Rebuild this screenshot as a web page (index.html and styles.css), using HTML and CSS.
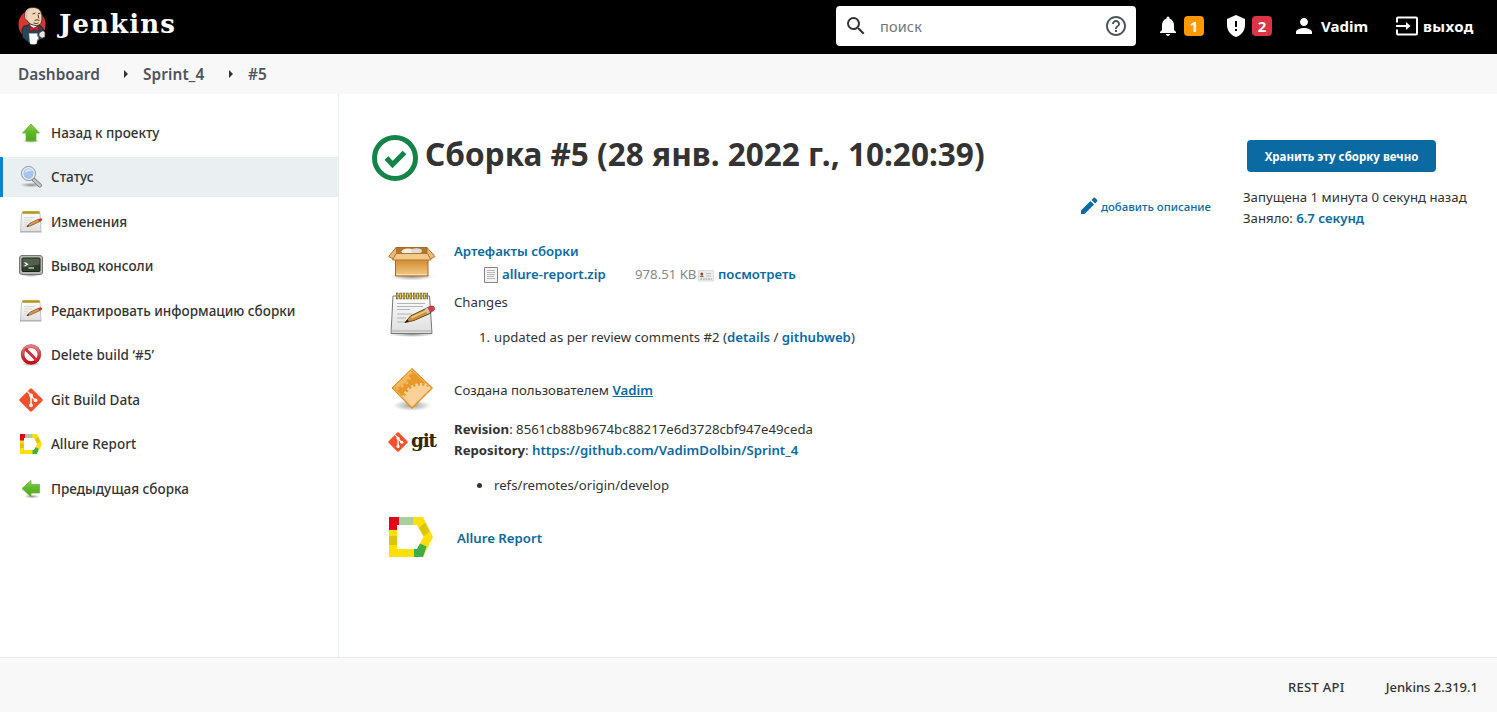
FILE: index.html
```html
<!DOCTYPE html>
<html lang="ru">
<head>
<meta charset="utf-8">
<title>Sprint_4 #5 [Jenkins]</title>
<link rel="stylesheet" href="styles.css">
</head>
<body>
<svg class="defs" aria-hidden="true">
  <defs>
    <linearGradient id="green" x1="0" y1="0" x2="0" y2="1"><stop offset="0" stop-color="#8fcf4c"/><stop offset=".5" stop-color="#5fb827"/><stop offset="1" stop-color="#4aa81b"/></linearGradient>
    <linearGradient id="paper" x1="0" y1="0" x2="0" y2="1"><stop offset="0" stop-color="#fdfdfd"/><stop offset="1" stop-color="#dedede"/></linearGradient>
    <linearGradient id="orange" x1="0" y1="0" x2="1" y2="1"><stop offset="0" stop-color="#e59a2c"/><stop offset="1" stop-color="#ea9524"/></linearGradient>
    <linearGradient id="carton" x1="0" y1="0" x2="0" y2="1"><stop offset="0" stop-color="#c98532"/><stop offset=".4" stop-color="#d9993f"/><stop offset="1" stop-color="#f3ca8a"/></linearGradient>
    <linearGradient id="redring" x1="0" y1="0" x2="0" y2="1"><stop offset="0" stop-color="#e88080"/><stop offset="1" stop-color="#c4060c"/></linearGradient>
    <radialGradient id="shade"><stop offset="0" stop-color="#000" stop-opacity=".4"/><stop offset="1" stop-color="#000" stop-opacity="0"/></radialGradient>
    <clipPath id="diamond"><path d="M24 4L42.500 22 24 40.500 6 22z"/></clipPath>
    <symbol id="notepad-small" viewBox="0 0 24 24">
      <path d="M2.500 3.500h18.500l1 18h-20.500z" fill="url(#paper)" stroke="#c4c4c0"/>
      <path d="M1 22h21.500" stroke="#999" stroke-width=".8"/>
      <path d="M3.500 1h17v3h-17z" fill="#c2ad40"/><path d="M3.500 2.500h17" stroke="#927f24" stroke-dasharray="1 1"/>
      <path d="M5 7.500h11M5 10h8M5 12.500h4M5 15h3" stroke="#d8d8d8"/>
      <path d="M8 16.500l3-3.300 8.500-4 1.300 2.400-9.500 4.300z" fill="#d99a48" stroke="#79501e" stroke-width=".7"/>
      <path d="M19 9.300l2.700-1.100q1.700 0 1.500 2.200L20.500 11.800z" fill="#d8332b"/><path d="M7.500 17l1.700-2 .8 1.300z" fill="#222"/>
    </symbol>
    <symbol id="git-mark" viewBox="0 0 24 24">
      <path d="M11 .7a1.500 1.500 0 0 1 2 0L23.300 11a1.500 1.500 0 0 1 0 2L13 23.300a1.500 1.500 0 0 1-2 0L.7 13a1.500 1.500 0 0 1 0-2z" fill="#f4502c"/>
      <path d="M8.400 3.500L12 7.200v10.300M12 8l4 4" stroke="#fff" stroke-width="1.500" fill="none"/>
      <circle cx="12" cy="7.500" r="1.900" fill="#fff"/><circle cx="12" cy="17.300" r="1.900" fill="#fff"/><circle cx="16.500" cy="12.300" r="1.900" fill="#fff"/>
    </symbol>
    <symbol id="allure" viewBox="0 0 44 40">
      <path d="M0 0h34l10 20-10 20H0zM8 8v24h20l6.500-12L28 8z" fill="#ffdf0a" fill-rule="evenodd"/>
      <path d="M0 0h10v8H8v5H0z" fill="#e30613"/><path d="M10 0h14.500v8H10z" fill="#a6d0a0"/>
      <path d="M0 19h8v9H0z" fill="#dfc40e"/><path d="M30 11l6-5.500 4.500 9L35 19z" fill="#dfc40e"/>
      <path d="M25 40v-8h3l3-5.500 6.500 3L34 40z" fill="#3fae49"/>
    </symbol>
  </defs>
</svg>

<header class="header">
  <a class="brand">
    <svg class="brand-head" width="30" height="40" viewBox="0 0 30 40">
      <ellipse cx="14" cy="18.500" rx="13.500" ry="14.500" fill="#d33833"/>
      <path d="M4.500 31.500L4 24l1.500-3.500 6-2 9 0 4 3 2.500 6-1.500 4.500-8 4-7 .5z" fill="#28455a" stroke="#111" stroke-width=".7"/>
      <path d="M11.500 18.500l4.500 5 4-5z" fill="#f4f4f4"/>
      <path d="M7 11C6.500 4 10 1.500 15.500 1.500S24 5 24 11c0 6-1.500 8.500-5.500 8.500-4.500 0-8.500-2.500-10-6z" fill="#f0d6b7" stroke="#33261f" stroke-width=".9"/>
      <path d="M7 9c0-4.500 3-7 6-7-3 2-3.500 4-3.500 7.500L9 14C7 13 6.700 11 7 9z" fill="#cfc4b4"/>
      <path d="M14.500 8l3-1M20 7.500l2.500-.3M16.500 14.500q2.500-1.500 5 0M15.500 17q3 1 5 0M20 8.500l.8 4" stroke="#4b3b30" stroke-width="1" fill="none"/>
      <path d="M11.500 20.500l4.300 1.500 4.700-2v5l-4.500-1.300-4.300 1.800z" fill="#c8202f" stroke="#711" stroke-width=".5"/>
      <path d="M11 27.500h8.300v3h1v3h-1l-.6 4.300q-3.500 1-6.700 0z" fill="#fff" stroke="#bbb" stroke-width=".4"/>
      <path d="M21 27l4-2.500 2 2v4.500l-3 1.200-3-2z" fill="#e9e4df" stroke="#333" stroke-width=".7"/>
    </svg>
    <span class="brand-name">Jenkins</span>
  </a>
  <div class="search">
    <svg width="24" height="24" viewBox="0 0 24 24"><path fill="#333" d="M15.500 14h-.79l-.28-.27A6.470 6.470 0 0 0 16 9.500 6.500 6.500 0 1 0 9.500 16c1.610 0 3.090-.59 4.230-1.570l.27.28v.79l5 4.990L20.490 19zm-6 0C7.010 14 5 11.990 5 9.500S7.010 5 9.500 5 14 7.010 14 9.500 11.990 14 9.500 14z"/></svg>
    <span class="search-text">поиск</span>
    <svg width="24" height="24" viewBox="0 0 24 24"><path fill="#4d545d" d="M11 18h2v-2h-2zm1-16C6.480 2 2 6.480 2 12s4.480 10 10 10 10-4.480 10-10S17.520 2 12 2m0 18c-4.410 0-8-3.590-8-8s3.590-8 8-8 8 3.590 8 8-3.590 8-8 8m0-14c-2.210 0-4 1.790-4 4h2c0-1.100.9-2 2-2s2 .9 2 2c0 2-3 1.750-3 5h2c0-2.250 3-2.500 3-5 0-2.210-1.790-4-4-4"/></svg>
  </div>
  <div class="alerts">
    <svg width="24" height="24" viewBox="0 0 24 24"><path fill="#fff" d="M12 22c1.100 0 2-.9 2-2h-4a2 2 0 0 0 2 2m6-6v-5c0-3.070-1.640-5.640-4.500-6.320V4a1.500 1.500 0 0 0-3 0v.68C7.630 5.360 6 7.920 6 11v5l-2 2v1h16v-1z"/></svg>
    <span class="badge badge-warn">1</span>
  </div>
  <div class="alerts alerts-security">
    <svg width="24" height="24" viewBox="0 0 24 24"><path fill="#fff" d="M12 1L3 5v6c0 5.550 3.840 10.740 9 12 5.160-1.260 9-6.450 9-12V5z"/><path fill="#000" d="M11 7h2v6h-2zm0 8h2v2h-2z"/></svg>
    <span class="badge badge-danger">2</span>
  </div>
  <a class="user">
    <svg width="24" height="24" viewBox="0 0 24 24"><path fill="#fff" d="M12 12c2.210 0 4-1.790 4-4s-1.790-4-4-4-4 1.790-4 4 1.790 4 4 4m0 2c-2.670 0-8 1.340-8 4v2h16v-2c0-2.660-5.330-4-8-4"/></svg>
    <span class="user-name">Vadim</span>
  </a>
  <a class="logout">
    <svg width="24" height="24" viewBox="0 0 24 24"><path fill="none" stroke="#fff" stroke-width="2" d="M2 8.500V4.500q0-1 1-1h18q1 0 1 1v15q0 1-1 1H3q-1 0-1-1v-4"/><path fill="#fff" d="M1 11h10V8l4.500 4-4.500 4v-3H1z"/></svg>
    <span class="logout-text">выход</span>
  </a>
</header>

<nav class="crumbs">
  <span class="crumb crumb-dash">Dashboard</span><i class="arrow"></i>
  <span class="crumb crumb-job">Sprint_4</span><i class="arrow"></i>
  <span class="crumb">#5</span>
</nav>

<div class="page">
  <aside class="side">
    <a class="task"><svg width="24" height="24" viewBox="0 0 24 24"><ellipse cx="12" cy="20" rx="9" ry="2" fill="url(#shade)"/><path d="M12 3l8.500 9H17v8H7v-8H3.500z" fill="url(#green)" stroke="#6cb43e" stroke-width=".8"/></svg><span>Назад к проекту</span></a>
    <a class="task active"><svg width="24" height="24" viewBox="0 0 24 24"><ellipse cx="12" cy="20" rx="11" ry="2.500" fill="url(#shade)"/><path d="M14 14l7 6.500" stroke="#777" stroke-width="4" stroke-linecap="round"/><path d="M15 15l6 5.500" stroke="#c6c6c6" stroke-width="2.400" stroke-linecap="round"/><circle cx="9.500" cy="8.500" r="7" fill="#a9c9ec" stroke="#8e9297"/><circle cx="9.500" cy="8.500" r="5.800" fill="#a3c5ee" stroke="#e8eef5" stroke-width="1.300"/><path d="M5.500 8q1-4 5-4 2 0 3 1.500-4 0-8 2.500" fill="#d7e7f9"/></svg><span>Статус</span></a>
    <a class="task"><svg width="24" height="24"><use href="#notepad-small"/></svg><span>Изменения</span></a>
    <a class="task"><svg width="24" height="24" viewBox="0 0 24 24"><ellipse cx="12" cy="21" rx="10" ry="2" fill="url(#shade)"/><rect x=".5" y="1.500" width="23" height="19" rx="2.500" fill="#b9bab6" stroke="#777"/><rect x="3" y="4" width="18" height="13.500" rx="1" fill="#2f3e28" stroke="#1c2418"/><path d="M3.500 4.500h17v6l-17 3z" fill="#50604a"/><path d="M5.500 8.500l3 1.700-3 1.700M9.500 14h5.500" stroke="#fff" stroke-width="1.200" fill="none"/></svg><span>Вывод консоли</span></a>
    <a class="task"><svg width="24" height="24"><use href="#notepad-small"/></svg><span>Редактировать информацию сборки</span></a>
    <a class="task"><svg width="24" height="24" viewBox="0 0 24 24"><ellipse cx="12" cy="21" rx="10" ry="2" fill="url(#shade)"/><circle cx="12" cy="11.500" r="8.400" fill="#fff" stroke="#b8444a" stroke-width="3.600"/><circle cx="12" cy="11.500" r="8.400" fill="none" stroke="url(#redring)" stroke-width="2.800"/><path d="M6.300 5.800l11.400 11.400" stroke="#cf3038" stroke-width="3"/></svg><span>Delete build ‘#5’</span></a>
    <a class="task"><svg width="24" height="24"><use href="#git-mark"/></svg><span>Git Build Data</span></a>
    <a class="task"><svg width="24" height="24" viewBox="-1 -2 24 24"><use href="#allure" width="22" height="20"/></svg><span>Allure Report</span></a>
    <a class="task"><svg width="24" height="24" viewBox="0 0 24 24"><ellipse cx="13" cy="19.500" rx="8" ry="2" fill="url(#shade)"/><path d="M3 11.500L12 3.500V7.500h8.500v8.500H12v4z" fill="url(#green)" stroke="#6cb43e" stroke-width=".8"/></svg><span>Предыдущая сборка</span></a>
  </aside>

  <main class="main">
    <section class="content">
      <div class="title">
        <svg width="46" height="46" viewBox="0 0 46 46"><circle cx="23" cy="23" r="20.500" fill="#fff" stroke="#138347" stroke-width="5"/><path d="M14.500 23l6 6.500 12-12" fill="none" stroke="#138347" stroke-width="5.200"/></svg>
        <h1>Сборка #5 (28 янв. 2022 г., 10:20:39)</h1>
      </div>
      <div class="describe">
        <svg width="18" height="18" viewBox="0 0 18 18"><path fill="#0b6aa2" d="M1 13.400V17h3.600L14 7.600 10.400 4zM17.200 4.300a1 1 0 0 0 0-1.300L15 .8a1 1 0 0 0-1.300 0l-2.200 2.100 3.600 3.600z"/></svg>
        <a>добавить описание</a>
      </div>

      <div class="row row-artifacts">
        <svg width="48" height="48" viewBox="0 0 48 48">
          <ellipse cx="24" cy="36.500" rx="22" ry="4" fill="url(#shade)"/>
          <path d="M8 7.500h31v8H8z" fill="#b5772c" stroke="#a06a28"/>
          <ellipse cx="20" cy="11.500" rx="6.500" ry="3" fill="#f0eee9"/><ellipse cx="28.500" cy="11" rx="5.500" ry="2.700" fill="#dedbd4"/>
          <path d="M7.500 15h32.500v21H7.500z" fill="url(#carton)" stroke="#a9692a"/>
          <path d="M8 7.500L.7 16.500l4.500 2.500 3.500-5.500zM39 7.500l8 9-4.500 2.500-3.500-5.500z" fill="#edbb77" stroke="#b37430"/>
          <path d="M8 13.500h31.500l3.500 6.500H4.500z" fill="#f2c988" stroke="#b37430"/>
          <path d="M8.500 34.500h30.500" stroke="#f9dfb2"/>
        </svg>
        <div class="row-text">
          <a class="strong-link artifacts-title">Артефакты сборки</a>
          <div class="file">
            <svg width="14" height="16" viewBox="0 0 14 16"><path d="M.5.500h13v15H.500z" fill="#f4f4f4" stroke="#858585"/><path d="M3 3.500h8M3 5.500h8M3 7.500h8M3 9.500h7M3 11.500h8" stroke="#bbb"/></svg>
            <a class="strong-link file-name">allure-report.zip</a>
            <span class="size">978.51 KB</span>
            <svg class="card" width="16" height="12" viewBox="0 0 16 12"><path d="M.5.500h15v10.500H.500z" fill="#ededed" stroke="#ddd"/><circle cx="3.800" cy="4" r="1.500" fill="#8b4b28"/><path d="M1.500 7q2.300-3 4.700 0z" fill="#687424"/><path d="M8 3.500h5M8 6h5" stroke="#bbb"/><path d="M2 9h12" stroke="#999" stroke-dasharray="2 .7"/></svg>
            <a class="strong-link view-link">посмотреть</a>
          </div>
        </div>
      </div>

      <div class="row row-changes">
        <svg width="48" height="48" viewBox="0 0 48 48">
          <ellipse cx="24" cy="44.500" rx="23" ry="2.500" fill="url(#shade)"/>
          <path d="M5 6h36.500l2.500 37.500H3z" fill="url(#paper)" stroke="#777"/><path d="M3.500 41h40" stroke="#aaa"/>
          <path d="M9 13.500h28M9 16.500h26M9 19.500h13M9 24h15M9 28h9M9 32h8" stroke="#b4b4b4"/>
          <path d="M8 6h32" stroke="#5c4f12" stroke-width="6.500" stroke-dasharray="2.400 1"/><path d="M8.600 6h31" stroke="#e7cf4a" stroke-width="5" stroke-dasharray="1.200 2.200"/>
          <path d="M17 32.500l5.500-6.500L40 17.500l3 5.500-17 7.500z" fill="#c99540" stroke="#6a481c"/><path d="M23.500 27.500l16.500-7.500" stroke="#f2c980" stroke-width="1.500"/>
          <path d="M39.500 17.500l3.500-1.500q3-.5 3.700 2.200 0 2-1.700 2.800L42 22.500z" fill="#df3b3b" stroke="#8e2424" stroke-width=".6"/><path d="M37 18.800l2.700-1.300L42 22.500l-2.700 1.300z" fill="#c4c4c4"/><path d="M17 32.700l2.500-3 1.500 1.500z" fill="#111"/>
        </svg>
        <div class="row-text">
          <span class="changes-title">Changes</span>
          <div class="change"><span class="num">1.</span><span class="change-text">updated as per review comments #2 (<a class="strong-link">details</a> / <a class="strong-link">githubweb</a>)</span></div>
        </div>
      </div>

      <div class="row row-user">
        <svg width="48" height="48" viewBox="0 0 48 48">
          <ellipse cx="24" cy="39.500" rx="19" ry="5.500" fill="url(#shade)"/>
          <path d="M24 2.500L44.500 22 24 42.500 4 22z" fill="url(#orange)" stroke="#e0871a" stroke-linejoin="round"/>
          <g clip-path="url(#diamond)">
            <circle cx="6" cy="6" r="15.500" fill="#f3b65e"/><circle cx="6" cy="6" r="16.500" fill="none" stroke="#f3b65e" stroke-width="3" stroke-dasharray="2.600 2.600"/>
            <circle cx="33" cy="37" r="17.500" fill="#fbd197"/><circle cx="33" cy="37" r="18.500" fill="none" stroke="#fbd197" stroke-width="3" stroke-dasharray="2.300 2.200"/>
          </g>
          <path d="M24 4L42.700 22 24 40.700 5.700 22z" fill="none" stroke="#fbdcab" stroke-width=".6"/>
        </svg>
        <div class="row-text"><span class="created">Создана пользователем <a class="strong-link underlined">Vadim</a></span></div>
      </div>

      <div class="row row-git">
        <div class="git-logo"><svg width="20" height="20"><use href="#git-mark"/></svg><span>git</span></div>
        <div class="row-text">
          <div class="line revision"><b>Revision</b>: 8561cb88b9674bc88217e6d3728cbf947e49ceda</div>
          <div class="line repository"><b>Repository</b>: <a class="strong-link">https://github.com/VadimDolbin/Sprint_4</a></div>
          <div class="ref"><i class="dot"></i><span>refs/remotes/origin/develop</span></div>
        </div>
      </div>

      <div class="row row-allure">
        <svg width="48" height="48" viewBox="-1 -3 48 48"><use href="#allure" width="44" height="40"/></svg>
        <a class="strong-link allure-link">Allure Report</a>
      </div>
    </section>
    <aside class="info">
      <button class="keep"><span>Хранить эту сборку вечно</span></button>
      <div class="line started">Запущена 1 минута 0 секунд назад</div>
      <div class="line took">Заняло: <a class="strong-link">6.7 секунд</a></div>
    </aside>
  </main>
</div>

<footer class="footer"><a class="rest">REST API</a><a class="version">Jenkins 2.319.1</a></footer>
</body>
</html>
```

FILE: styles.css
```css
* { box-sizing: border-box; }
body {
  margin: 0; height: 712px; overflow: hidden; display: flex; flex-direction: column;
  background: #fff; color: #333;
  font: 400 13.2px/21px "Noto Sans", "Open Sans", sans-serif;
}
svg { display: block; flex: none; }
span, a, h1 { white-space: nowrap; }
.defs { position: absolute; width: 0; height: 0; }

.header { height: 54px; flex: none; background: #000; color: #fff; display: flex; align-items: center; font-weight: 700; }
.brand { display: flex; align-items: center; padding-left: 18px; width: 836px; height: 54px; }
.brand-head { margin-top: -2px; }
.brand-name { font: 700 26px/40px "DejaVu Serif", Georgia, serif; letter-spacing: 1.1px; margin: -6px 0 0 11px; }
.search { width: 300px; height: 40px; margin-top: -2px; background: #fff; border-radius: 4px; display: flex; align-items: center; padding: 0 8px; }
.search-text { color: #757575; font-size: 14.5px; letter-spacing: .15px; font-weight: 400; margin-left: 12px; flex: 1; }
.alerts { display: flex; align-items: center; margin: -2px 0 0 20px; gap: 4px; }
.badge { width: 20px; height: 20px; border-radius: 4px; text-align: center; font-size: 15px; line-height: 20px; }
.badge-warn { background: #ff9800; }
.badge-danger { background: #dc3545; }
.user, .logout { display: flex; align-items: center; margin-top: -2px; gap: 5px; font-size: 15px; }
.user { margin-left: 20px; width: 103px; }
.logout { gap: 4px; }
.logout-text { letter-spacing: .4px; }

.crumbs { height: 40px; flex: none; background: #f8f8f8; display: flex; align-items: center; padding-left: 18px; color: #4d545d; font-size: 15.4px; font-weight: 600; }
.crumb-dash { width: 82px; }
.crumb-job { width: 62px; letter-spacing: .1px; }
.arrow { width: 0; height: 0; border: 4px solid transparent; border-left-color: #333; border-right: 0; margin: 0 15px 0 24px; }

.page { flex: 1; display: flex; min-height: 0; }
.side { width: 339px; flex: none; border-right: 1px solid #eaeff2; padding-top: 18.500px; display: flex; flex-direction: column; gap: 4.500px; }
.task { height: 40px; display: flex; align-items: center; gap: 8px; padding-left: 19px; font-size: 13.5px; font-weight: 500; }
.task span { padding-top: 1px; }
.active { background: #eaeff2; border-left: 3px solid #0b83d0; padding-left: 16px; }

.main { flex: 1; display: flex; min-width: 0; }
.content { width: 904px; flex: none; padding: 39px 0 0 49px; }
.title { display: flex; gap: 7px; height: 50px; margin-left: -16px; align-items: center; }
h1 { margin: -8px 0 0; font-size: 31.55px; line-height: 44px; font-weight: 700; }
.describe { display: flex; align-items: center; gap: 3px; height: 22px; margin: 12px 0 0 692px; color: #0b6aa2; font-size: 11.4px; font-weight: 500; }
.row { display: flex; gap: 18px; }
.row-artifacts { margin-top: 23px; height: 50px; }
.row-text { display: flex; flex-direction: column; }
.strong-link { color: #0b6aa2; font-weight: 600; }
.artifacts-title { margin-top: 1px; }
.file { display: flex; align-items: center; height: 25px; margin-left: 30px; }
.file-name { margin-left: 4px; width: 133px; }
.size { color: #888; width: 63px; }
.view-link { margin-left: 4px; }
.card { margin-top: 3px; }
.row-changes { height: 76px; }
.changes-title { margin-top: 2px; }
.change { display: flex; gap: 4px; margin: 14px 0 0 25px; }
.num { width: 11px; }
.row-user { height: 53px; align-items: flex-start; }
.row-user .row-text { margin-top: 14px; }
.underlined { text-decoration: underline; }
.row-git { height: 95px; }
.git-logo { width: 48px; height: 46px; display: flex; align-items: center; gap: 3px; }
.git-logo span { font: 700 18.5px/24px "DejaVu Serif", serif; letter-spacing: -1.2px; color: #362701; margin-top: -3px; }
.line { white-space: nowrap; }
b { font-weight: 700; }
.ref { display: flex; align-items: center; gap: 12px; margin: 14px 0 0 23px; }
.dot { width: 5px; height: 5px; border-radius: 50%; background: #333; }
.row-allure { gap: 21px; align-items: center; height: 48px; }

.info { padding-top: 46px; }
.keep { display: flex; justify-content: center; align-items: center; width: 189px; height: 32px; margin: 0 0 15px 4px; padding: 2px 0 0; border: 0; border-radius: 4px; background: #0b6aa2; color: #fff; font: 700 11.5px/16px "Noto Sans", sans-serif; }

.footer { height: 55px; flex: none; background: #f8f8f8; border-top: 1px solid #eaeaea; display: flex; justify-content: flex-end; align-items: center; padding: 4px 19px 0 0; gap: 41px; font-size: 13px; font-weight: 500; }
.rest { letter-spacing: .3px; }
```
